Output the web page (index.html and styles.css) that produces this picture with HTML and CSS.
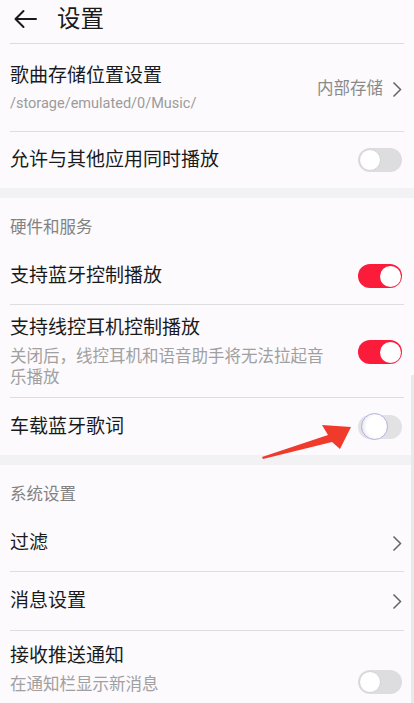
FILE: index.html
```html
<!DOCTYPE html>
<html lang="zh">
<head>
<meta charset="utf-8">
<title>设置</title>
<link rel="stylesheet" href="styles.css">
</head>
<body>
<div class="page">
  <header class="topbar">
    <svg class="back" width="24" height="20" viewBox="0 0 24 20"><path d="M23 10H2.5M10.5 2L2.5 10L10.5 18" fill="none" stroke="#1a1a1a" stroke-width="2" stroke-linecap="round" stroke-linejoin="round"/></svg>
    <h1 class="title-main">设置</h1>
  </header>

  <div class="row row-storage divided">
    <div class="text">
      <div class="title">歌曲存储位置设置</div>
      <div class="path">/storage/emulated/0/Music/</div>
    </div>
    <span class="value">内部存储</span>
    <svg class="chev" width="10" height="17" viewBox="0 0 10 17"><path d="M1.5 1.5L8.5 8.5L1.5 15.5" fill="none" stroke="#666" stroke-width="1.5"/></svg>
  </div>
  <div class="row row-single">
    <div class="text"><div class="title">允许与其他应用同时播放</div></div>
    <span class="toggle"></span>
  </div>

  <div class="band"></div>
  <div class="section">硬件和服务</div>

  <div class="row row-single divided">
    <div class="text"><div class="title">支持蓝牙控制播放</div></div>
    <span class="toggle on"></span>
  </div>
  <div class="row row-wire divided">
    <div class="text">
      <div class="title">支持线控耳机控制播放</div>
      <div class="sub">关闭后，线控耳机和语音助手将无法拉起音乐播放</div>
    </div>
    <span class="toggle on"></span>
  </div>
  <div class="row row-car">
    <div class="text"><div class="title">车载蓝牙歌词</div></div>
    <span class="toggle pressed"></span>
  </div>

  <div class="band"></div>
  <div class="section">系统设置</div>

  <div class="row row-single divided">
    <div class="text"><div class="title">过滤</div></div>
    <svg class="chev" width="10" height="17" viewBox="0 0 10 17"><path d="M1.5 1.5L8.5 8.5L1.5 15.5" fill="none" stroke="#666" stroke-width="1.5"/></svg>
  </div>
  <div class="row row-msg divided">
    <div class="text"><div class="title">消息设置</div></div>
    <svg class="chev" width="10" height="17" viewBox="0 0 10 17"><path d="M1.5 1.5L8.5 8.5L1.5 15.5" fill="none" stroke="#666" stroke-width="1.5"/></svg>
  </div>
  <div class="row row-push">
    <div class="text">
      <div class="title">接收推送通知</div>
      <div class="sub">在通知栏显示新消息</div>
    </div>
    <span class="toggle"></span>
  </div>

  <div class="scrollbar"></div>
  <svg class="arrow" width="414" height="703" viewBox="0 0 414 703">
    <polygon points="351,427 322,425 328,435 262,457 263,459 332,442 340,449" fill="#ef3a2c"/>
  </svg>
</div>
</body>
</html>
```
FILE: styles.css
```css
html, body {
  margin: 0;
  padding: 0;
  background: #fcfafd;
}
body {
  font-family: Roboto, "Noto Sans CJK SC", sans-serif;
  color: #1b1b1b;
}
.page {
  position: relative;
  width: 414px;
  height: 703px;
  overflow: hidden;
  background: #fcfafd;
}
.topbar {
  height: 43px;
  margin: 0 10px;
  border-bottom: 1px solid #dcdbde;
  display: flex;
  align-items: center;
  padding-left: 3px;
  gap: 20px;
}
.back { display: block; margin-top: -5px; }
.title-main {
  margin: 0;
  font-weight: 400;
  font-size: 23.5px;
  line-height: 30px;
  margin-top: -6px;
  color: #1a1a1a;
}
.row {
  margin: 0 10px;
  padding-right: 2px;
  display: flex;
  align-items: center;
  box-sizing: border-box;
}
.row.divided { border-bottom: 1px solid #dedde0; }
.text { flex: 1; min-width: 0; }
.title {
  font-size: 19px;
  line-height: 24px;
  color: #1a1a1a;
}
.path {
  font-size: 14.5px;
  line-height: 20px;
  color: #9b9b9b;
  margin-top: 6px;
}
.sub {
  font-size: 16.5px;
  line-height: 21px;
  color: #a0a0a0;
  margin-top: 6px;
  padding-right: 20px;
}
.value {
  font-size: 16.5px;
  line-height: 22px;
  color: #8a8a8a;
  margin-right: 9px;
}
.chev { display: block; }
.row-storage { height: 88px; padding-top: 3px; }
.row-single { height: 57px; }
.row-single:not(.divided) { height: 56px; }
.row-wire { height: 93px; padding-top: 2px; }
.row-car { height: 57px; }
.row-msg { height: 59px; }
.row-push { height: 80px; align-items: flex-start; padding-top: 13px; }
.row-push .toggle { margin-top: 26px; }
.band {
  height: 10px;
  background: #f2f1f4;
}
.section {
  height: 50px;
  box-sizing: border-box;
  padding: 19px 10px 0;
  font-size: 16.5px;
  line-height: 22px;
  color: #828282;
}
.toggle {
  width: 44px;
  height: 24px;
  box-sizing: border-box;
  border-radius: 12px;
  background: #dddcdf;
  display: flex;
  align-items: center;
  padding: 1px;
  flex: none;
}
.toggle::after {
  content: "";
  width: 22px;
  height: 22px;
  border-radius: 50%;
  background: #fff;
  box-sizing: border-box;
  border: 1px solid #d4d3d6;
}
.toggle.on {
  background: #fb1b3b;
  justify-content: flex-end;
  padding: 1.5px;
}
.toggle.on::after {
  width: 21px;
  height: 21px;
  border: none;
}
.toggle.pressed { background: #e2e1e4; padding-left: 3px; }
.toggle.pressed::after {
  width: 27px;
  height: 27px;
  border: 1.5px solid #b3b1de;
  background: radial-gradient(circle at 62% 50%, #ffffff 55%, #ecebef 75%);
  flex: none;
}
.scrollbar {
  position: absolute;
  right: 0;
  top: 375px;
  width: 3px;
  height: 328px;
  background: #e9e8eb;
}
.arrow {
  position: absolute;
  left: 0;
  top: 0;
  pointer-events: none;
}
```
